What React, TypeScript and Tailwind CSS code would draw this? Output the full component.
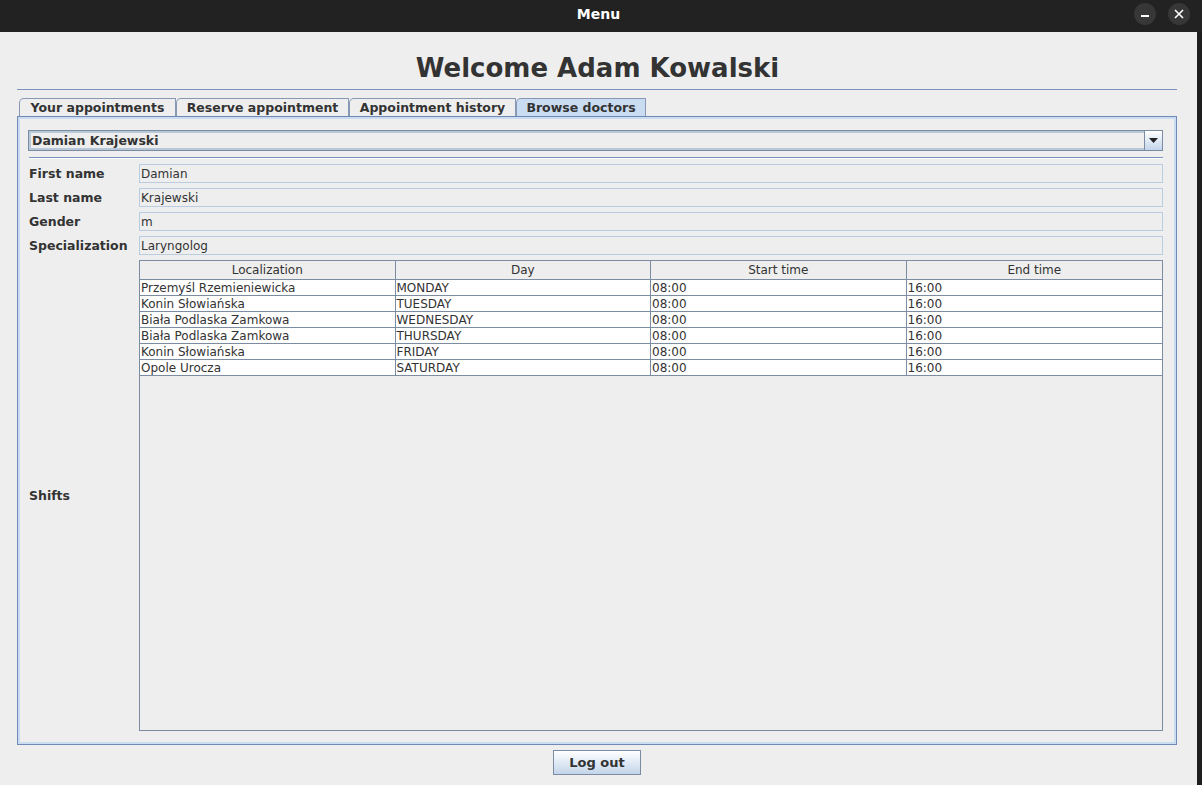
import React from 'react';

const shifts = [
    { place: 'Przemyśl Rzemieniewicka', day: 'MONDAY', start: '08:00', end: '16:00' },
    { place: 'Konin Słowiańska', day: 'TUESDAY', start: '08:00', end: '16:00' },
    { place: 'Biała Podlaska Zamkowa', day: 'WEDNESDAY', start: '08:00', end: '16:00' },
    { place: 'Biała Podlaska Zamkowa', day: 'THURSDAY', start: '08:00', end: '16:00' },
    { place: 'Konin Słowiańska', day: 'FRIDAY', start: '08:00', end: '16:00' },
    { place: 'Opole Urocza', day: 'SATURDAY', start: '08:00', end: '16:00' },
];

const tabs = [
    { label: 'Your appointments', width: 'w-[157px]' },
    { label: 'Reserve appointment', width: 'w-[173px]' },
    { label: 'Appointment history', width: 'w-[167px]' },
    { label: 'Browse doctors', width: 'w-[130px]' },
];

const fields = [
    { label: 'First name', value: 'Damian' },
    { label: 'Last name', value: 'Krajewski' },
    { label: 'Gender', value: 'm' },
    { label: 'Specialization', value: 'Laryngolog' },
];

export default function App() {
    return (
        <div className="w-[1202px] h-[785px] bg-[#222222] flex flex-col font-['DejaVu_Sans',sans-serif] text-[#333333] overflow-hidden">
            {/* title bar */}
            <div className="relative w-[1197px] h-[32px] shrink-0 flex items-center justify-center">
                <span className="text-white text-[14px] font-bold -mt-[4px]">Menu</span>
                <div className="absolute right-[7px] top-[3px] flex gap-[12px]">
                    <div className="w-[22px] h-[22px] rounded-full bg-[#373737] flex items-center justify-center">
                        <div className="w-[8px] h-[2px] bg-white mt-[4px]" />
                    </div>
                    <div className="w-[22px] h-[22px] rounded-full bg-[#373737] flex items-center justify-center">
                        <svg width="10" height="10" viewBox="0 0 10 10">
                            <path d="M1 1L9 9M9 1L1 9" stroke="white" strokeWidth="1.6" />
                        </svg>
                    </div>
                </div>
            </div>

            <div className="flex flex-1">
                <div className="w-[1197px] bg-[#eeeeee] flex flex-col px-[17px]">
                    <h1 className="mt-[20px] h-[32px] leading-[32px] text-center text-[26px] font-bold text-[#333333] pr-[2px]">
                        Welcome Adam Kowalski
                    </h1>
                    <div className="mt-[5px] w-[1160px] h-[1px] bg-[#7a93bd]" />

                    {/* tabs */}
                    <div className="mt-[8px] flex pl-[2px] h-[18px]">
                        {tabs.map((t, i) => (
                            <div
                                key={t.label}
                                className={`${t.width} h-[18px] pt-[2px] border border-b-0 border-[#8898b4] rounded-tl-[5px] flex items-center justify-center text-[12.5px] font-bold leading-none ${i === 3 ? 'bg-[#c9dcf1]' : 'bg-[#eeeeee]'}`}
                            >
                                {t.label}
                            </div>
                        ))}
                    </div>

                    {/* tab panel */}
                    <div className="w-[1160px] h-[629px] border border-[#6f88b4]">
                        <div className="h-full border-2 border-[#c9dcf1] flex flex-col pt-[11px] pl-[8px] pr-[11px] pb-[11px]">
                            <div className="h-[21px] border border-[#7b8ca3] shadow-[inset_0_0_0_2px_#b9c8d9] flex">
                                <div className="flex-1 flex items-center pl-[3px] pt-[2px] text-[12.5px] font-bold">Damian Krajewski</div>
                                <div className="w-[18px] border-l border-[#7b8ca3] bg-gradient-to-b from-white to-[#c3d5ea] flex items-center justify-center">
                                    <svg width="9" height="5" viewBox="0 0 9 5">
                                        <path d="M0 0H9L4.5 5Z" fill="#222" />
                                    </svg>
                                </div>
                            </div>
                            <div className="mt-[6px] ml-[1px] h-[1px] bg-[#7a93bd]" />
                            <div className="ml-[1px] h-[1px] bg-white" />

                            <div className="mt-[5px] flex flex-col gap-[5px]">
                                {fields.map((f) => (
                                    <div key={f.label} className="flex items-center h-[19px]">
                                        <div className="w-[111px] mt-[2px] text-[12.5px] font-bold pl-[1px]">{f.label}</div>
                                        <div className="flex-1 h-[19px] border border-[#b9cde2] flex items-center pl-[1px] text-[12px]">
                                            {f.value}
                                        </div>
                                    </div>
                                ))}
                            </div>

                            <div className="mt-[5px] flex flex-1 items-center">
                                <div className="w-[111px] mt-[2px] text-[12.5px] font-bold pl-[1px]">Shifts</div>
                                <div className="flex-1 h-full border border-[#7b8ca3] flex flex-col">
                                    <div className="grid grid-cols-4 h-[19px] border-b border-[#7b8ca3]">
                                        {['Localization', 'Day', 'Start time', 'End time'].map((h, i) => (
                                            <div
                                                key={h}
                                                className={`flex items-center justify-center text-[12px] ${i < 3 ? 'border-r border-[#7b8ca3]' : ''}`}
                                            >
                                                {h}
                                            </div>
                                        ))}
                                    </div>
                                    {shifts.map((s, r) => (
                                        <div key={r} className="grid grid-cols-4 h-[16px] border-b border-[#7b8ca3] bg-white">
                                            {[s.place, s.day, s.start, s.end].map((c, i) => (
                                                <div
                                                    key={i}
                                                    className={`flex items-center pl-[1px] text-[12px] leading-none ${i < 3 ? 'border-r border-[#7b8ca3]' : ''}`}
                                                >
                                                    {c}
                                                </div>
                                            ))}
                                        </div>
                                    ))}
                                </div>
                            </div>
                        </div>
                    </div>

                    <div className="mt-[5px] flex justify-center pr-[3px]">
                        <button className="w-[88px] h-[25px] border border-[#7b8ca3] bg-gradient-to-b from-white to-[#c3d5ea] text-[13px] font-bold text-[#333333]">
                            Log out
                        </button>
                    </div>
                </div>
                <div className="flex-1 bg-[#1e1e1e]" />
            </div>
        </div>
    );
}
